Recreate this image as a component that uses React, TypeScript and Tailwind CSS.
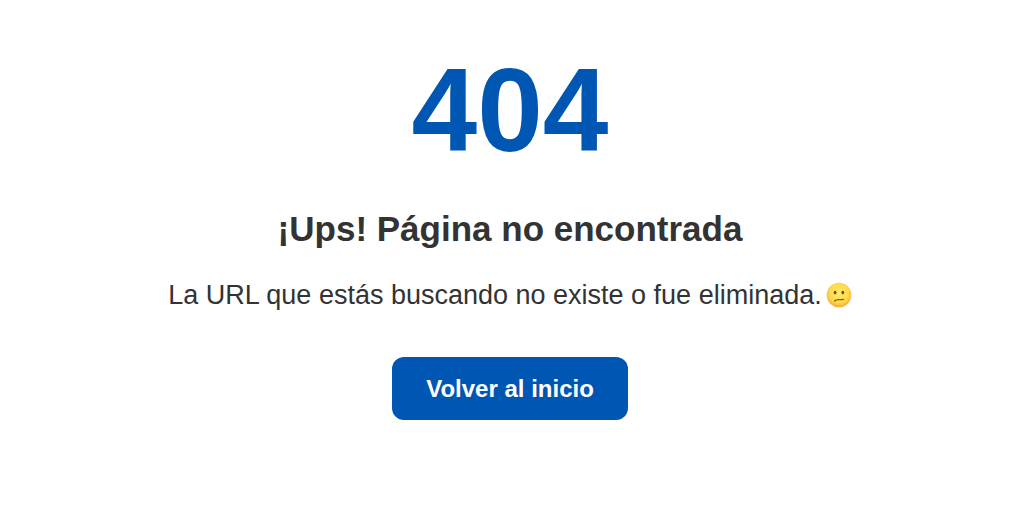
function ConfusedFace() {
  return (
    <svg viewBox="0 0 26 26" className="h-[26px] w-[26px] shrink-0" role="img" aria-label="Cara confundida">
      <defs>
        <radialGradient id="face" cx="50%" cy="42%" r="60%">
          <stop offset="0%" stopColor="#ffec6a" />
          <stop offset="65%" stopColor="#ffd94b" />
          <stop offset="100%" stopColor="#f4a432" />
        </radialGradient>
      </defs>
      <circle cx="13" cy="13" r="12.3" fill="url(#face)" />
      <ellipse cx="9.1" cy="10.6" rx="1.4" ry="1.8" fill="#6b4a14" />
      <ellipse cx="16.8" cy="10.6" rx="1.4" ry="1.8" fill="#6b4a14" />
      <path
        d="M8.6 19.2 C10.4 16.6 13.4 18.4 17.4 17.4"
        fill="none"
        stroke="#7a5518"
        strokeWidth="1.2"
        strokeLinecap="round"
      />
    </svg>
  );
}

export default function NotFoundPage() {
  return (
    <main className="flex min-h-screen flex-col items-center bg-white pt-10 pr-5 pl-4 text-center font-['Liberation_Sans',Arial,sans-serif] text-[#333333]">
      <h1 className="text-[118px] leading-[140px] font-bold text-[#0056b3]">404</h1>
      <h2 className="mt-7 text-[35px] leading-[42px] font-bold">¡Ups! Página no encontrada</h2>
      <p className="mt-[29px] flex items-center gap-1 text-[27px] leading-8">
        La URL que estás buscando no existe o fue eliminada.
        <ConfusedFace />
      </p>
      <a
        href="/"
        className="mt-[46px] rounded-xl bg-[#0056b3] px-[34px] py-4 text-[24px] leading-[31px] font-bold text-white"
      >
        Volver al inicio
      </a>
    </main>
  );
}
